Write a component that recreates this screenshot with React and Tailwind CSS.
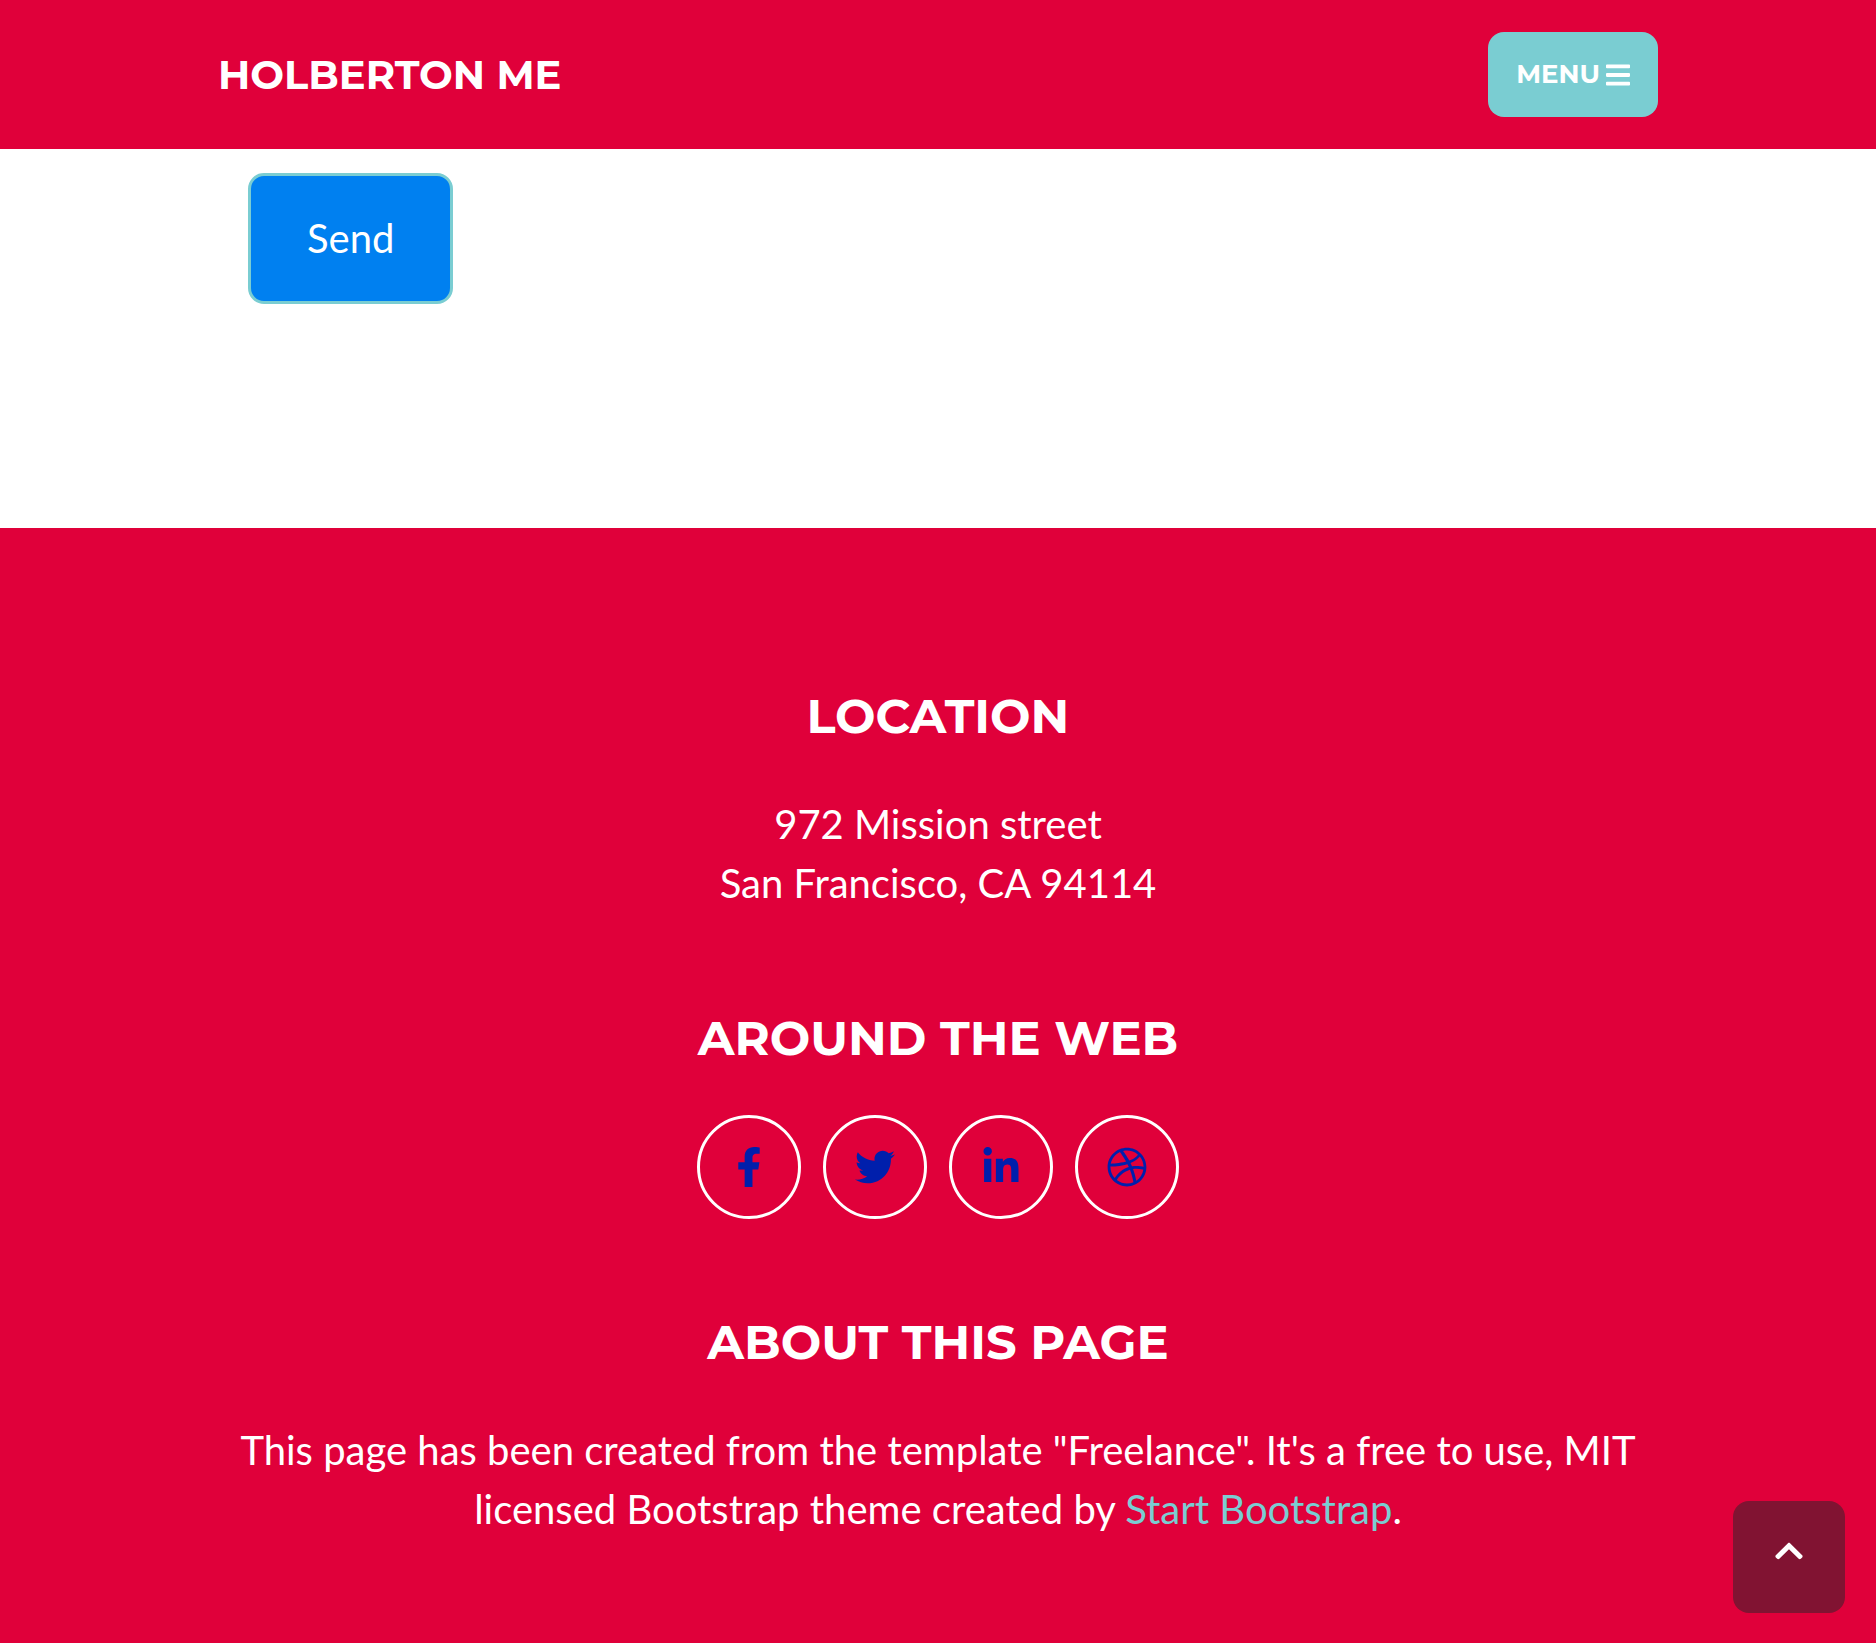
import {
  FaBars,
  FaChevronUp,
  FaDribbble,
  FaFacebookF,
  FaLinkedinIn,
  FaTwitter,
} from "react-icons/fa";

const socials = [
  { label: "Facebook", Icon: FaFacebookF },
  { label: "Twitter", Icon: FaTwitter },
  { label: "LinkedIn", Icon: FaLinkedinIn },
  { label: "Dribbble", Icon: FaDribbble },
];

function Heading({ children }) {
  return (
    <h4 className="font-[Montserrat,Inter,sans-serif] text-5xl leading-[58px] font-bold uppercase">
      {children}
    </h4>
  );
}

function Navbar() {
  return (
    <nav className="bg-[#e0003a] px-6 py-8 text-white">
      <div className="mx-auto flex max-w-[1440px] items-center justify-between font-[Montserrat,Inter,sans-serif] font-bold uppercase">
        <a href="#page-top" className="text-[40px] leading-[60px]">
          Holberton Me
        </a>
        <button
          type="button"
          className="flex h-[85px] items-center gap-1.5 rounded-2xl bg-[#7acdd2] px-7 text-[26px] uppercase"
        >
          Menu
          <FaBars className="h-7 w-6" aria-hidden="true" />
        </button>
      </div>
    </nav>
  );
}

export default function App() {
  return (
    <div
      id="page-top"
      className="flex min-h-screen flex-col bg-white font-[Lato,sans-serif] text-[40px] leading-[59px]"
    >
      <Navbar />

      <main className="px-6 pt-6 pb-56">
        <div className="mx-auto max-w-[1440px] px-[30px]">
          <button
            type="submit"
            className="rounded-2xl border-3 border-[#7acdd2] bg-[#0080f0] px-14 py-[33px] text-white"
          >
            Send
          </button>
        </div>
      </main>

      <footer className="grow bg-[#e0003a] px-6 pt-[159px] pb-24 text-center text-white">
        <div className="mx-auto max-w-[1440px]">
          <section className="mb-24 flex flex-col gap-[50px]">
            <Heading>Location</Heading>
            <p>
              972 Mission street
              <br />
              San Francisco, CA 94114
            </p>
          </section>

          <section className="mb-[94px] flex flex-col gap-12">
            <Heading>Around the Web</Heading>
            <ul className="flex justify-center gap-[22px]">
              {socials.map(({ label, Icon }) => (
                <li key={label}>
                  <a
                    href="#page-top"
                    aria-label={label}
                    className="flex size-26 items-center justify-center rounded-full border-3 border-white text-[#001fac]"
                  >
                    <Icon className="size-10" aria-hidden="true" />
                  </a>
                </li>
              ))}
            </ul>
          </section>

          <section className="flex flex-col gap-[50px]">
            <Heading>About this page</Heading>
            <p>
              This page has been created from the template "Freelance". It's a
              free to use, MIT licensed Bootstrap theme created by{" "}
              <a href="#page-top" className="text-[#7acdd2]">
                Start Bootstrap
              </a>
              .
            </p>
          </section>
        </div>
      </footer>

      <a
        href="#page-top"
        aria-label="Back to top"
        className="fixed right-[31px] bottom-[30px] flex size-28 items-center justify-center rounded-2xl bg-[#811332] pb-3 text-white"
      >
        <FaChevronUp className="size-8" aria-hidden="true" />
      </a>
    </div>
  );
}
